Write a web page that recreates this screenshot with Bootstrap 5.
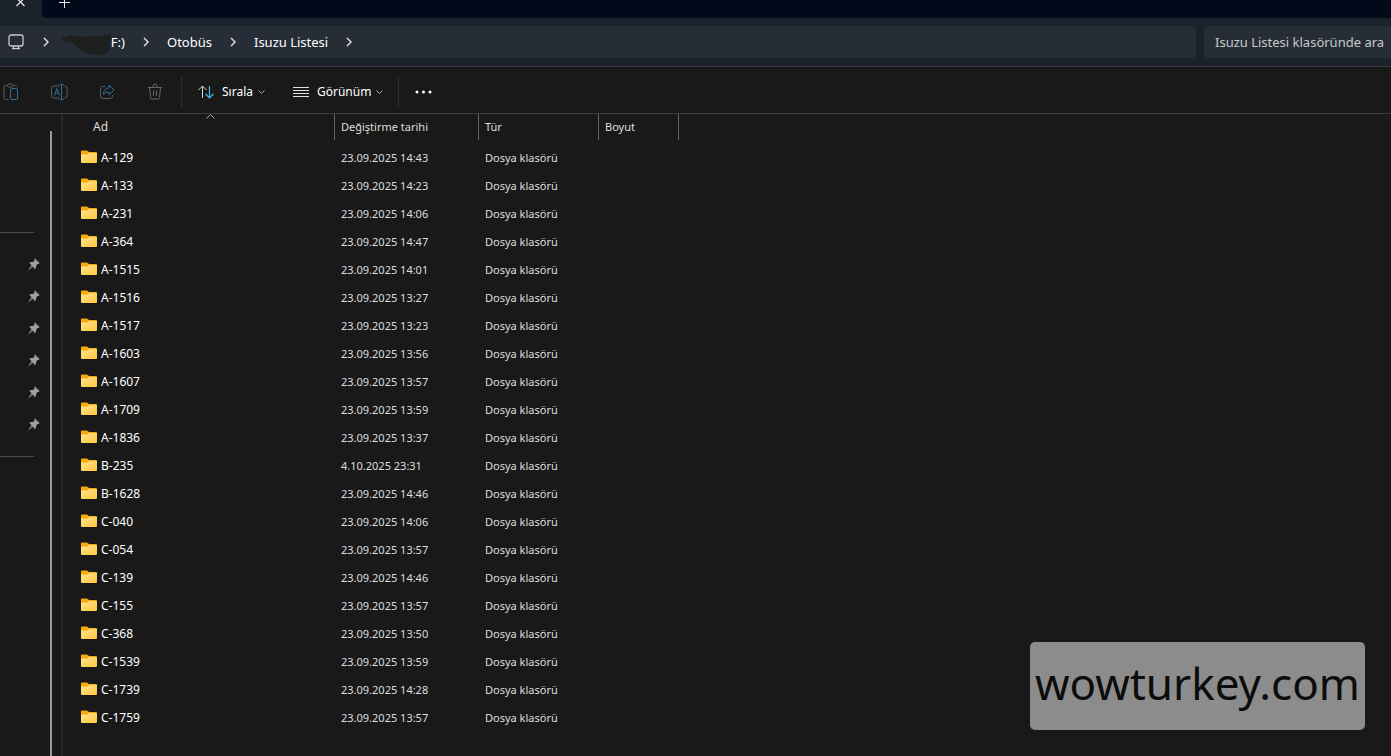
<!DOCTYPE html>
<html lang="tr" data-bs-theme="dark">
<head>
<meta charset="utf-8">
<meta name="viewport" content="width=device-width, initial-scale=1">
<title>Isuzu Listesi</title>
<link href="https://cdn.jsdelivr.net/npm/bootstrap@5.3.0/dist/css/bootstrap.min.css" rel="stylesheet">
<style>
body { background: #191919; color: #fff; font: 12px/16px "Noto Sans", "Open Sans", sans-serif; overflow: hidden; }
svg { display: block; flex: none; fill: none; }
button, .crumb { color: inherit; background: none; border: 0; padding: 0; text-decoration: none; }
.tabstrip { height: 18px; background: #1b222c; }
.tab-current { width: 42px; padding-left: 15px; }
.tab-rest { background: #000a1b; border-bottom-left-radius: 4px; padding-left: 16px; }
.navrow { background: #1b222c; border-bottom: 1px solid #3c3c3c; height: 49px; }
.address, .search { height: 32px; background: #272d36; }
.address { border-radius: 0 4px 4px 0; padding-left: 8px; font-size: 13px; }
.search { width: 187px; font-size: 13px; border: 0; border-radius: 4px 0 0 4px; padding: 0 0 0 11px; color: #c8cacc; }
.search::placeholder { color: #c8cacc; opacity: 1; }
.drive { width: 66px; height: 32px; }
.scribble { left: 3px; top: 8px; }
.toolbar { height: 47px; border-bottom: 1px solid #3c3c3c; padding-top: 3px; }
.tool { width: 48px; }
.tool svg { margin-left: 3px; }
.split { width: 1px; height: 32px; background: #2e2e2e; margin-left: 14px; }
.split-first { margin-left: -11px; }
.dots { fill: #fff; }
.view-menu { margin-left: 27px; }
.side { width: 50px; padding-top: 118px; }
.side hr { width: 34px; margin: 0; border-color: #4a4a4a; opacity: 1; }
.pins { padding: 15px 0 16px; }
.pin { height: 32px; padding-left: 28px; }
.pin svg { fill: #93a0aa; }
.thumb { width: 2px; margin-top: 17px; background: #9a9a9a; }
.pane-edge { width: 2px; margin-left: 9px; background: #2a2a2a; }
.files { table-layout: fixed; width: 617px; margin-left: -1px; font-size: 11px; }
.files th { font-weight: 400; padding: 0; height: 30px; vertical-align: top; color: #dedede; }
.files th div { height: 26px; line-height: 26px; padding-left: 6px; border-right: 1px solid #636363; }
.files th:first-child div { padding-left: 31px; font-size: 12px; }
.files td { height: 28px; padding: 0 0 0 6px; color: #dedede; white-space: nowrap; }
.files td:first-child { padding-left: 19px; color: #fff; font-size: 12px; }
.sort-mark { left: 143px; top: 0; }
.watermark { right: 26px; bottom: 26px; width: 335px; height: 88px; border-radius: 5px; background: #8c8c8c; color: #0c0c0c; font: 44px/82px "Noto Sans", sans-serif; white-space: nowrap; }
</style>
</head>
<body>
<svg width="0" height="0" class="position-absolute" aria-hidden="true">
  <defs>
    <linearGradient id="fold" x1="0" y1="0" x2="1" y2="1"><stop offset="0" stop-color="#ffe393"/><stop offset="1" stop-color="#ffc83d"/></linearGradient>
  </defs>
</svg>
<div class="d-flex flex-column vh-100 position-relative">
  <div class="tabstrip d-flex">
    <button class="tab-current" aria-label="Sekmeyi kapat"><svg width="11" height="18" viewBox="0 0 11 18" stroke="#e8e8e8" stroke-width="1.2"><path d="M1.500-2 5.500 2 9.500 6M9.500-2 1.500 6"/></svg></button>
    <div class="tab-rest flex-grow-1 d-flex"><button aria-label="Yeni sekme"><svg width="13" height="18" viewBox="0 0 13 18" stroke="#e8e8e8"><path d="M1 2.500h11M6.500-3v11"/></svg></button></div>
  </div>

  <div class="navrow d-flex align-items-center gap-2">
    <nav class="address d-flex align-items-center flex-grow-1" aria-label="Adres">
      <svg width="17" height="18" viewBox="0 0 17 18" stroke="#c9ccd0" stroke-width="1.300"><rect x="1" y="2" width="14" height="11" rx="2"/><path d="M5.500 13v2.500M10.500 13v2.500M4 15.700h8"/></svg>
      <svg class="ms-3" width="10" height="10" viewBox="0 0 10 10" stroke="#e6e6e6" stroke-width="1.400"><path d="M3 1l4 4-4 4"/></svg>
      <a href="#" class="crumb drive position-relative d-flex align-items-center justify-content-end ms-2">
        <span class="position-relative">F:)</span>
        <svg class="scribble position-absolute" width="51" height="24" viewBox="0 0 51 24"><path d="M3 4C6 1 10 2 13 3c3-1 6-1 10 0 5-2 10 0 14-1 4-1 8-2 11-1 3 2 1 5 0 8 0 3 0 6-2 9-3 4-8 4-13 3-7-1-14-4-18-8-3-2-4-4-6-5-3 0-6 1-8-1s-1-4 2-3z" fill="#1f1f1f"/></svg>
      </a>
      <svg class="ms-3" width="10" height="10" viewBox="0 0 10 10" stroke="#e6e6e6" stroke-width="1.400"><path d="M3 1l4 4-4 4"/></svg>
      <a href="#" class="crumb ms-3">Otobüs</a>
      <svg class="ms-3" width="10" height="10" viewBox="0 0 10 10" stroke="#e6e6e6" stroke-width="1.400"><path d="M3 1l4 4-4 4"/></svg>
      <a href="#" class="crumb ms-3">Isuzu Listesi</a>
      <svg class="ms-3" width="10" height="10" viewBox="0 0 10 10" stroke="#e6e6e6" stroke-width="1.400"><path d="M3 1l4 4-4 4"/></svg>
    </nav>
    <input class="search" type="text" aria-label="Ara" placeholder="Isuzu Listesi klasöründe ara">
  </div>

  <div class="toolbar d-flex align-items-center">
    <button class="tool" aria-label="Yapıştır"><svg width="17" height="18" viewBox="0 0 17 18" stroke="#5c5c5c"><path d="M5.500 16.500h-3a1.500 1.500 0 0 1-1.500-1.500V4a1.500 1.500 0 0 1 1.500-1.500h2M10.500 2.500h1A1.500 1.500 0 0 1 13.500 4"/><rect x="4.500" y="1" width="6" height="3" rx="1.500"/><rect x="7.500" y="5.500" width="7" height="11" rx="1.500" stroke="#2e6f94"/></svg></button>
    <button class="tool" aria-label="Yeniden adlandır"><svg width="17" height="18" viewBox="0 0 17 18" stroke="#5c5c5c"><path d="M8.500 15H3a2.500 2.500 0 0 1-2.500-2.500v-7A2.500 2.500 0 0 1 3 3h5.500M12.500 3h1A2.500 2.500 0 0 1 16 5.500v7a2.500 2.500 0 0 1-2.500 2.500h-1"/><path stroke="#2e6f94" d="M3.500 12.500 6 5.500l2.500 7M4.500 10h3M10.500 1.500v15M8.500 1.500h4M8.500 16.500h4"/></svg></button>
    <button class="tool" aria-label="Paylaş"><svg width="17" height="18" viewBox="0 0 17 18" stroke="#5c5c5c"><path d="M6 3.500H4A2.500 2.500 0 0 0 1.500 6v7A2.500 2.500 0 0 0 4 15.500h7a2.500 2.500 0 0 0 2.500-2.500v-1"/><path stroke="#2e6f94" d="M10 2v3C6.500 5 4.500 8 4.500 11.500 6 9.500 8 9 10 9v3l5-5z"/></svg></button>
    <button class="tool" aria-label="Sil"><svg width="17" height="18" viewBox="0 0 17 18" stroke="#686868"><path d="M1 4.500h14M6 4V3a2 2 0 0 1 4 0v1M2.500 4.500l1 10a1.500 1.500 0 0 0 1.500 1.500h6a1.500 1.500 0 0 0 1.500-1.500l1-10M6.500 7.500v5.500M9.500 7.500v5.500"/></svg></button>
    <div class="split split-first"></div>
    <button class="d-flex align-items-center ms-3"><svg width="16" height="16" viewBox="0 0 16 16"><path stroke="#d8d8d8" d="M4.500 14V2M.500 6l4-4 4 4"/><path stroke="#4cb4ea" stroke-width="1.200" d="M11.500 2v12M7.500 10l4 4 4-4"/></svg><span class="ms-2">Sırala</span><svg class="ms-1" width="9" height="10" viewBox="1 0 9 10" stroke="#a8a8a8"><path d="M2.500 3.500l3 3 3-3"/></svg></button>
    <button class="view-menu d-flex align-items-center"><svg width="16" height="16" viewBox="0 0 16 16" stroke="#e0e0e0"><path d="M0 3.500h16M0 6.500h16M0 9.500h16M0 12.500h16"/></svg><span class="ms-2">Görünüm</span><svg class="ms-1" width="9" height="10" viewBox="1 0 9 10" stroke="#a8a8a8"><path d="M2.500 3.500l3 3 3-3"/></svg></button>
    <div class="split"></div>
    <button class="ms-3" aria-label="Diğer"><svg class="dots" width="17" height="8" viewBox="0 0 17 8"><circle cx="2" cy="4" r="1.500"/><circle cx="8.500" cy="4" r="1.500"/><circle cx="15" cy="4" r="1.500"/></svg></button>
  </div>

  <div class="d-flex flex-grow-1">
    <aside class="side">
      <hr>
      <div class="pins" id="pins"></div>
      <hr>
    </aside>
    <div class="thumb"></div>
    <div class="pane-edge"></div>
    <main class="flex-grow-1 position-relative">
      <table class="files">
        <colgroup><col style="width:273px"><col style="width:144px"><col style="width:120px"><col style="width:80px"></colgroup>
        <thead><tr><th><div>Ad</div></th><th><div>Değiştirme tarihi</div></th><th><div>Tür</div></th><th><div>Boyut</div></th></tr></thead>
        <tbody id="rows"></tbody>
      </table>
      <svg class="sort-mark position-absolute" width="9" height="6" viewBox="0 0 9 6" stroke="#b0b0b0"><path d="M.5 4.500l4-4 4 4"/></svg>
    </main>
  </div>
  <div class="watermark position-absolute text-center">wowturkey.com</div>
</div>
<script>
const files = [
  ["A-129", "23.09.2025 14:43"], ["A-133", "23.09.2025 14:23"], ["A-231", "23.09.2025 14:06"],
  ["A-364", "23.09.2025 14:47"], ["A-1515", "23.09.2025 14:01"], ["A-1516", "23.09.2025 13:27"],
  ["A-1517", "23.09.2025 13:23"], ["A-1603", "23.09.2025 13:56"], ["A-1607", "23.09.2025 13:57"],
  ["A-1709", "23.09.2025 13:59"], ["A-1836", "23.09.2025 13:37"], ["B-235", "4.10.2025 23:31"],
  ["B-1628", "23.09.2025 14:46"], ["C-040", "23.09.2025 14:06"], ["C-054", "23.09.2025 13:57"],
  ["C-139", "23.09.2025 14:46"], ["C-155", "23.09.2025 13:57"], ["C-368", "23.09.2025 13:50"],
  ["C-1539", "23.09.2025 13:59"], ["C-1739", "23.09.2025 14:28"], ["C-1759", "23.09.2025 13:57"]
];
const folder = '<svg width="16" height="16" viewBox="0 0 16 16"><path d="M0 7V1.500A1 1 0 0 1 1 .500h5L8 2h7a1 1 0 0 1 1 1v4z" fill="#f5ab0c"/><path d="M0 5a.5.5 0 0 1 .5-.5H6.500L8 3h7.500a.5.5 0 0 1 .5.5V12a1 1 0 0 1-1 1H1a1 1 0 0 1-1-1z" fill="url(#fold)"/></svg>';
document.getElementById("rows").innerHTML = files.map(([name, date]) =>
  `<tr><td><div class="d-flex align-items-center gap-1">${folder}<span>${name}</span></div></td><td>${date}</td><td>Dosya klasörü</td><td></td></tr>`).join("");
const pin = '<div class="pin d-flex align-items-center"><svg width="12" height="12" viewBox="0 0 12 12"><path d="M7 .5 11.500 5 10.500 6H9.500L8 8v2L7 11 4.500 8.500 1 12 .5 11.500 3.500 7.500 1.500 5 2.500 4H5L6.500 2.500V1z"/></svg></div>';
document.getElementById("pins").innerHTML = pin.repeat(6);
</script>
<script src="https://cdn.jsdelivr.net/npm/bootstrap@5.3.0/dist/js/bootstrap.bundle.min.js"></script>
</body>
</html>
